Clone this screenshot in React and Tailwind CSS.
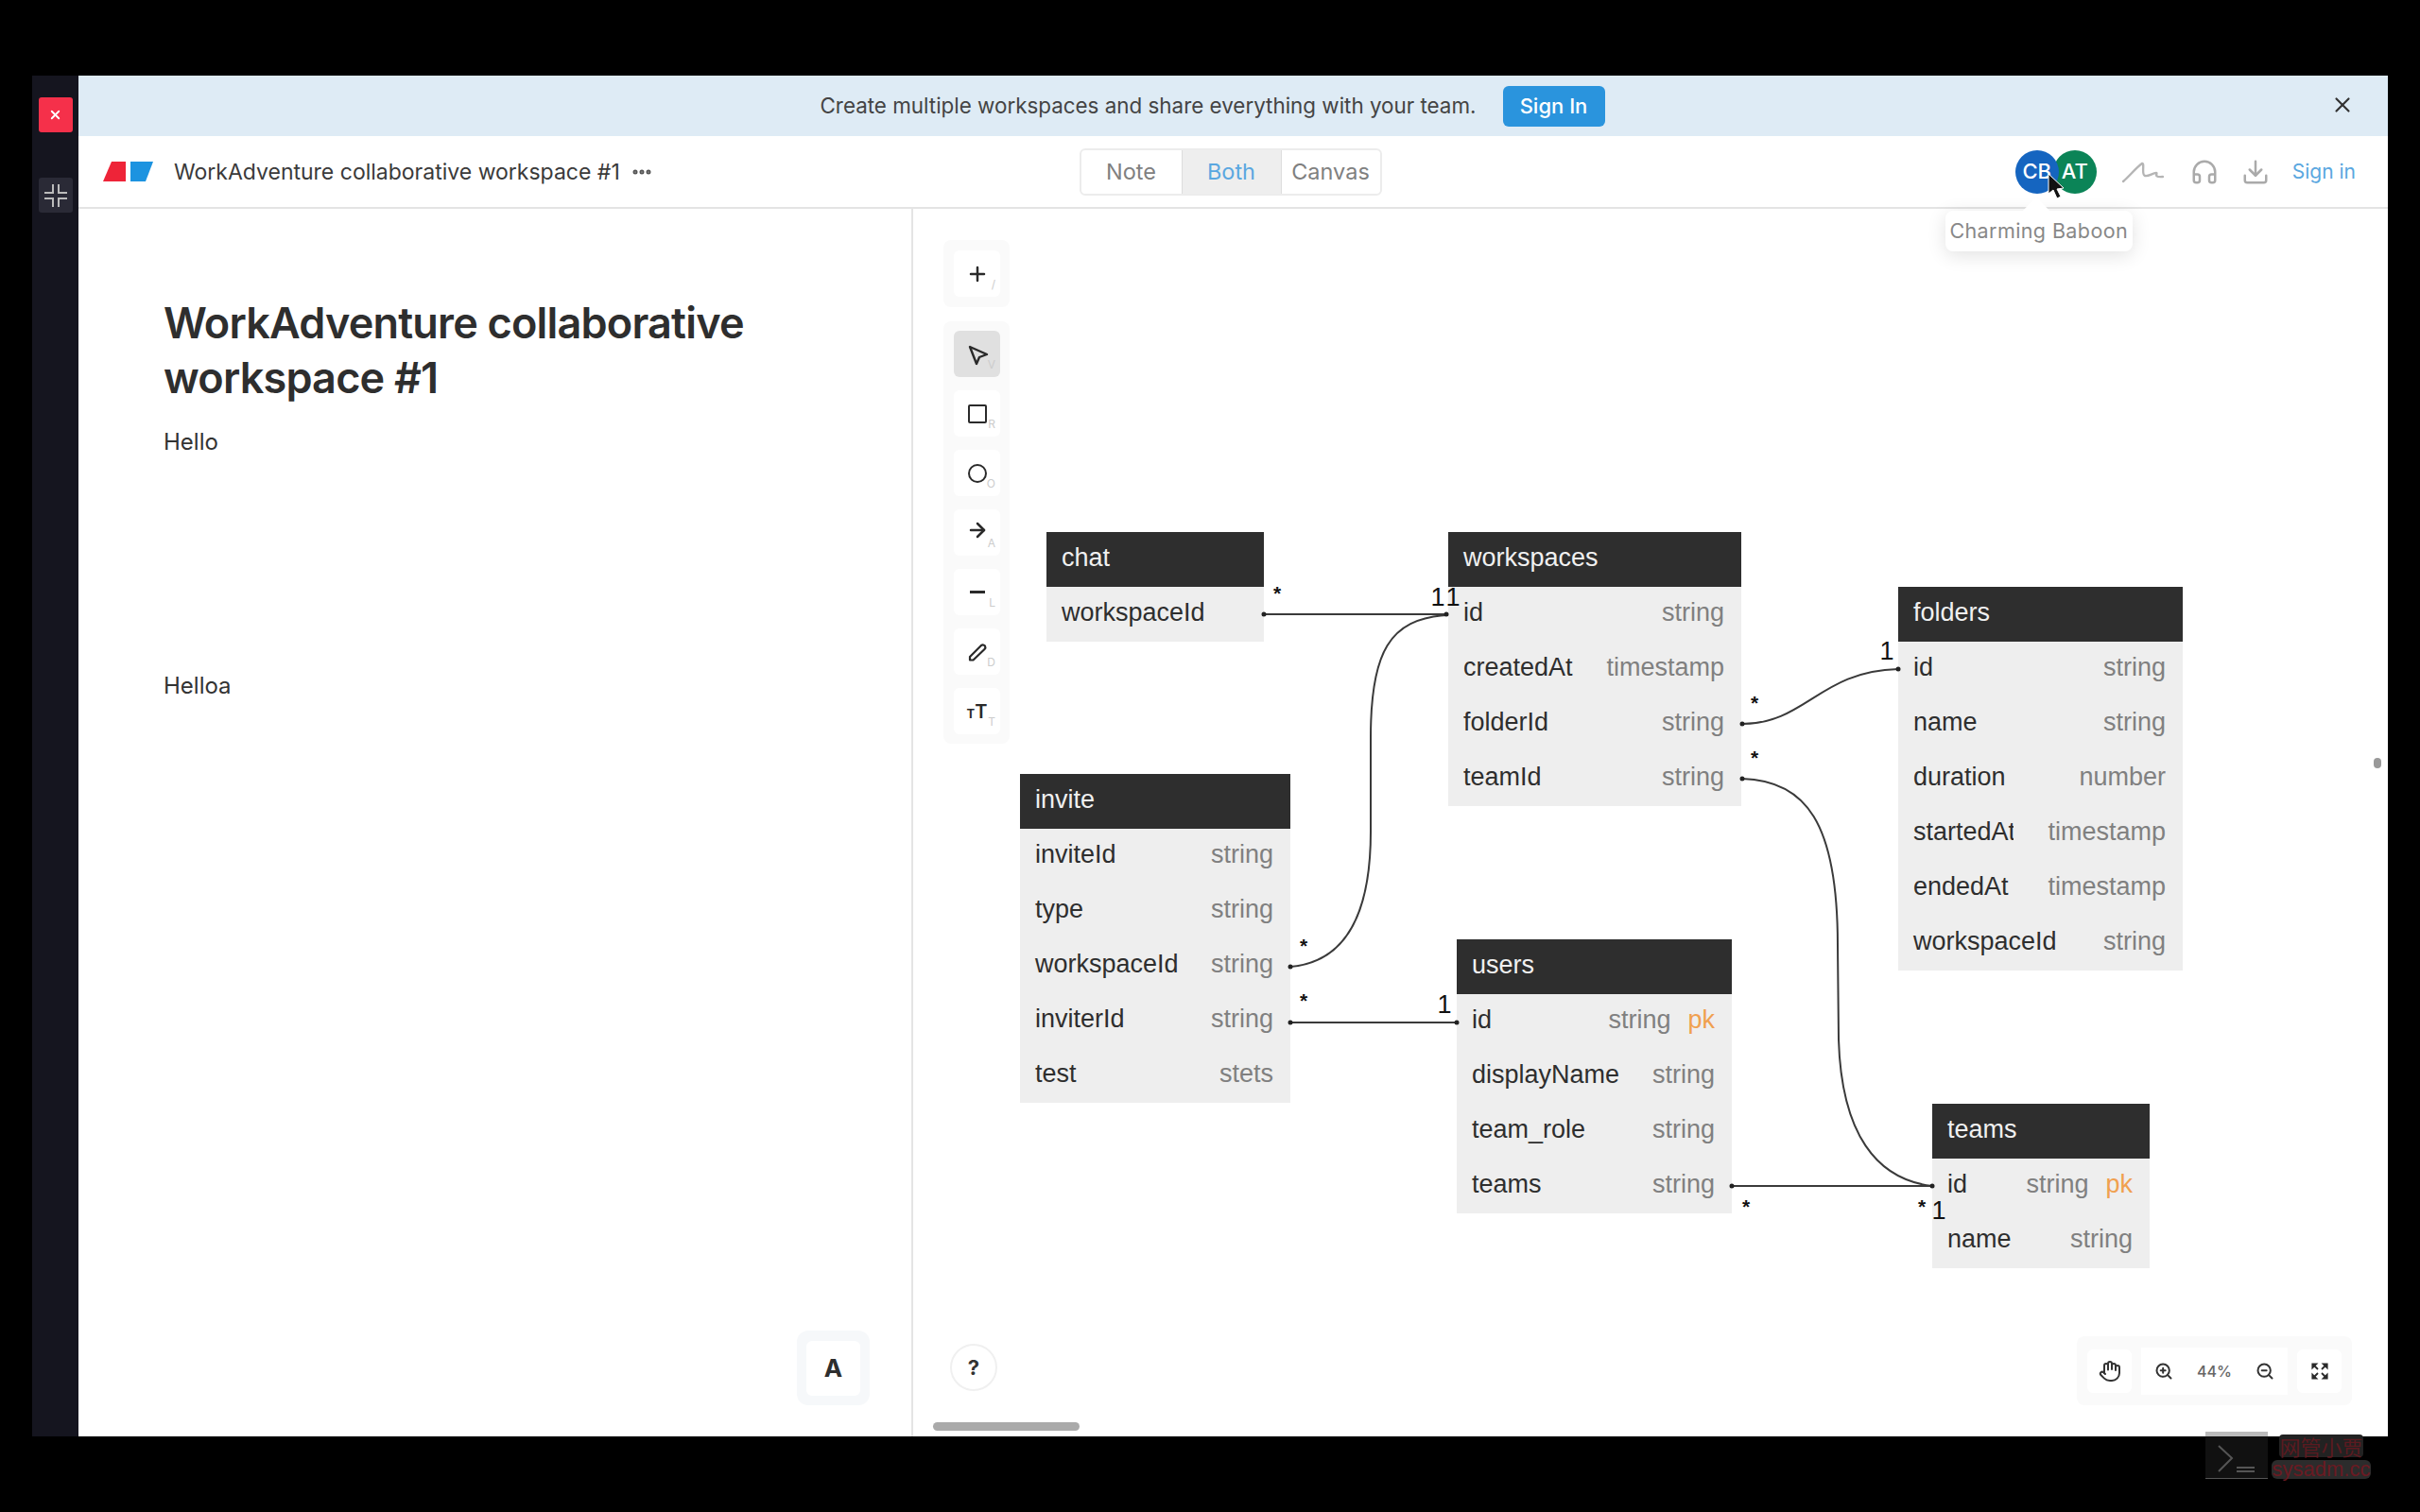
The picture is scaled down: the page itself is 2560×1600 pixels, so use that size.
import { ArrowRight, Download, Hand, Headphones, MoreHorizontal, Plus, X, ZoomIn, ZoomOut } from "lucide-react";

const tables = [
  {
    name: "chat",
    box: "left-[141px] top-[342px] w-[230px]",
    rows: [{ name: "workspaceId" }],
  },
  {
    name: "workspaces",
    box: "left-[566px] top-[342px] w-[310px]",
    rows: [
      { name: "id", type: "string" },
      { name: "createdAt", type: "timestamp" },
      { name: "folderId", type: "string" },
      { name: "teamId", type: "string" },
    ],
  },
  {
    name: "invite",
    box: "left-[113px] top-[598px] w-[286px]",
    rows: [
      { name: "inviteId", type: "string" },
      { name: "type", type: "string" },
      { name: "workspaceId", type: "string" },
      { name: "inviterId", type: "string" },
      { name: "test", type: "stets" },
    ],
  },
  {
    name: "users",
    box: "left-[575px] top-[773px] w-[291px]",
    rows: [
      { name: "id", type: "string", pk: true },
      { name: "displayName", type: "string" },
      { name: "team_role", type: "string" },
      { name: "teams", type: "string" },
    ],
  },
  {
    name: "folders",
    box: "left-[1042px] top-[400px] w-[301px]",
    rows: [
      { name: "id", type: "string" },
      { name: "name", type: "string" },
      { name: "duration", type: "number" },
      { name: "startedAt", type: "timestamp", clip: true },
      { name: "endedAt", type: "timestamp" },
      { name: "workspaceId", type: "string" },
    ],
  },
  {
    name: "teams",
    box: "left-[1078px] top-[947px] w-[230px]",
    rows: [
      { name: "id", type: "string", pk: true },
      { name: "name", type: "string" },
    ],
  },
];

const links = [
  "M1337 650 L1530 650",
  "M1365 1023 C1400 1020 1450 1000 1450 880 L1450 780 C1450 690 1470 655 1530 651",
  "M1365 1082 L1541 1082",
  "M1843 766 C1910 766 1925 710 2008 708",
  "M1843 824 C1910 826 1944 870 1944 1000 L1945 1100 C1948 1200 1985 1248 2044 1255",
  "M1832 1255 L2044 1255",
];

const dots = [
  [1337, 650], [1530, 650], [1365, 1023], [1365, 1082], [1541, 1082],
  [1843, 766], [2008, 708], [1843, 824], [2044, 1255], [1832, 1255],
];

const stars = [
  [1351, 625], [1856, 741], [1856, 799], [1379, 998], [1379, 1056], [1847, 1274], [2033, 1274],
];

const ones = [
  [1521, 641], [1537, 641], [1996, 698], [1528, 1072], [2051, 1290],
];

function Table({ table }) {
  return (
    <div className={`absolute ${table.box} bg-[#eeeeee] font-[family-name:'Liberation_Sans',sans-serif] text-[27px]`}>
      <div className="flex h-[58px] items-center bg-[#2e2e2e] pb-[4px] pl-4 text-[#f0f0f0]">{table.name}</div>
      {table.rows.map((row) => (
        <div key={row.name} className="flex h-[58px] items-center justify-between pb-[4px] pl-4 pr-[18px]">
          <span className={row.clip ? "w-[106px] overflow-hidden whitespace-nowrap text-[#2e2e2e]" : "whitespace-nowrap text-[#2e2e2e]"}>
            {row.name}
          </span>
          <span className="flex gap-[18px] text-[#808080]">
            {row.type}
            {row.pk && <span className="text-[#f0a050]">pk</span>}
          </span>
        </div>
      ))}
    </div>
  );
}

function Links() {
  return (
    <svg className="pointer-events-none absolute left-0 top-0 h-full w-full" fill="none">
      <g transform="translate(-966 -221)">
        {links.map((d) => (
          <path key={d} d={d} stroke="#3a3a3a" strokeWidth="2" />
        ))}
        {dots.map(([x, y]) => (
          <circle key={`${x}-${y}`} cx={x} cy={y} r="2.5" fill="#222222" />
        ))}
        <g fontFamily="Liberation Sans, sans-serif" fill="#111111">
          {stars.map(([x, y]) => (
            <text key={`${x}-${y}`} x={x} y={y + 10} fontSize="21" fontWeight="700" textAnchor="middle">*</text>
          ))}
          {ones.map(([x, y]) => (
            <text key={`${x}-${y}`} x={x} y={y} fontSize="27" textAnchor="middle">1</text>
          ))}
        </g>
      </g>
    </svg>
  );
}

function ToolButton({ hint, active, children }) {
  return (
    <div className={`relative flex h-[49px] w-[49px] items-center justify-center rounded-md ${active ? "bg-[#e0e0e0]" : "bg-white"}`}>
      {children}
      <span className="absolute bottom-[7px] right-[5px] text-[12px] leading-none text-[#cccccc]">{hint}</span>
    </div>
  );
}

function Toolbar() {
  return (
    <div className="absolute left-[32px] top-[33px] flex w-[70px] flex-col gap-[15px]">
      <div className="rounded-lg bg-[#fafafa] px-[11px] py-[11px]">
        <ToolButton hint="/"><Plus size={24} strokeWidth={2.5} color="#2a2a2a" /></ToolButton>
      </div>
      <div className="flex flex-col gap-[14px] rounded-lg bg-[#fafafa] px-[11px] py-[10px]">
        <ToolButton hint="V" active>
          <svg width="24" height="24" viewBox="0 0 24 24" fill="none" stroke="#2a2a2a" strokeWidth="2.4" strokeLinejoin="round">
            <path d="M4 4 L22 12 L14 15 L11 22 Z" />
          </svg>
        </ToolButton>
        <ToolButton hint="R"><div className="h-[20px] w-[20px] rounded-[2px] border-[2.5px] border-[#2a2a2a]" /></ToolButton>
        <ToolButton hint="O"><div className="h-[20px] w-[20px] rounded-full border-[2.5px] border-[#2a2a2a]" /></ToolButton>
        <ToolButton hint="A"><ArrowRight size={24} strokeWidth={2.5} color="#2a2a2a" className="-mt-[5px]" /></ToolButton>
        <ToolButton hint="L"><div className="h-[3px] w-[16px] bg-[#2a2a2a]" /></ToolButton>
        <ToolButton hint="D">
          <svg width="24" height="24" viewBox="0 0 24 24" fill="none" stroke="#2a2a2a" strokeWidth="2.2" strokeLinejoin="round">
            <path d="M4 17 L16 5 Q18 3.5 20 5.5 Q21 7.5 19.5 9 L7.5 20.5 L4 20.5 Z" />
          </svg>
        </ToolButton>
        <ToolButton hint="T">
          <span className="flex items-baseline font-bold leading-none text-[#2a2a2a]">
            <span className="text-[13px]">T</span>
            <span className="text-[20px] font-semibold">T</span>
          </span>
        </ToolButton>
      </div>
    </div>
  );
}

function ZoomBar() {
  return (
    <div className="absolute left-[1231px] top-[1193px] flex h-[73px] w-[291px] items-center gap-[10px] rounded-lg bg-[#fafafa] px-[11px]">
      <div className="flex h-[46px] w-[47px] items-center justify-center rounded-md bg-white">
        <Hand size={24} strokeWidth={2} color="#333333" />
      </div>
      <div className="flex h-[50px] w-[155px] items-center justify-between bg-white px-[14px]">
        <ZoomIn size={20} strokeWidth={2.4} color="#333333" />
        <span className="text-[16px] font-medium text-[#666666]">44%</span>
        <ZoomOut size={20} strokeWidth={2.4} color="#333333" />
      </div>
      <div className="flex h-[46px] w-[47px] items-center justify-center rounded-md bg-white">
        <svg width="18" height="18" viewBox="0 0 18 18" fill="#2a2a2a" stroke="#2a2a2a" strokeWidth="1.2">
          <path d="M1 1 H6 L1 6 Z M17 1 H12 L17 6 Z M1 17 H6 L1 12 Z M17 17 H12 L17 12 Z" />
          <path d="M3 3 L7 7 M15 3 L11 7 M3 15 L7 11 M15 15 L11 11" fill="none" strokeWidth="1.8" />
        </svg>
      </div>
    </div>
  );
}

function Header() {
  return (
    <div className="grid h-[77px] shrink-0 grid-cols-[1fr_auto_1fr] items-center border-b-2 border-[#e4e4e4] pl-[26px] pr-[34px]">
      <div className="flex items-center">
        <svg width="53" height="21" viewBox="0 0 53 21">
          <path d="M0 21 L9 0 H24 V21 Z" fill="#ee2438" />
          <path d="M29 0 H53 L45 21 H29 Z" fill="#1c93e0" />
        </svg>
        <span className="ml-[22px] mt-[2px] text-[23px] text-[#3a3a3a]">WorkAdventure collaborative workspace #1</span>
        <MoreHorizontal size={24} strokeWidth={3} color="#555555" className="ml-[11px]" />
      </div>
      <div className="ml-[2px] flex h-[50px] overflow-hidden rounded-md border-2 border-[#ececec] text-[23.5px] text-[#808080]">
        <div className="flex w-[106px] items-center justify-center">Note</div>
        <div className="flex w-[106px] items-center justify-center border-x border-[#dddddd] bg-[#eeeeee] text-[#5aa7e0]">Both</div>
        <div className="flex w-[104px] items-center justify-center">Canvas</div>
      </div>
      <div className="flex items-center justify-end gap-[24px]">
        <div className="relative mr-[3px] flex">
          <div className="relative z-10 flex h-[46px] w-[46px] items-center justify-center rounded-full bg-[#1565c0] text-[22px] font-medium text-white">CB</div>
          <div className="-ml-[6px] flex h-[46px] w-[46px] items-center justify-center rounded-full bg-[#0b8457] text-[22px] font-medium text-white">AT</div>
          <svg className="absolute left-[34px] top-[24px] z-20" width="22" height="30" viewBox="0 0 22 30">
            <path d="M1 1 V22 L6 18 L10 27 L14 25 L10 17 L17 16 Z" fill="#111111" stroke="#ffffff" strokeWidth="1" />
          </svg>
          <div className="absolute left-[-74px] top-[64px] z-20 flex h-[43px] w-[198px] items-center justify-center rounded-lg bg-white text-[21.5px] tracking-[0.4px] text-[#888888] shadow-[0_4px_20px_rgba(0,0,0,0.12)]">
            Charming Baboon
            <div className="absolute left-[86px] top-[-10px] h-[20px] w-[20px] rotate-45 bg-white" />
          </div>
        </div>
        <svg width="44" height="24" viewBox="0 0 44 24" fill="none" stroke="#b5b5b5" strokeWidth="2.4" strokeLinecap="round" strokeLinejoin="round">
          <path d="M1 22 C8 16 15 7 21 3 C24 2 20 15 24 16 C28 17 32 13 36 13 C38 13 32 18 43 17" />
        </svg>
        <Headphones size={30} strokeWidth={2} color="#aaaaaa" className="ml-[4px]" />
        <Download size={30} strokeWidth={2} color="#aaaaaa" />
        <span className="text-[21px] text-[#5aa7e0]">Sign in</span>
      </div>
    </div>
  );
}

export default function App() {
  return (
    <div className="relative h-[1600px] w-[2560px] overflow-hidden bg-black pl-[34px] pt-[80px] font-[family-name:Inter,sans-serif]">
      <div className="flex h-[1440px] w-[2492px]">
        <div className="flex w-[49px] shrink-0 flex-col items-center gap-[48px] bg-[#15151f] pt-[23px]">
          <div className="flex h-[37px] w-[36px] items-center justify-center rounded-[3px] bg-[#f5304a]">
            <X size={15} strokeWidth={3} color="#ffffff" />
          </div>
          <div className="flex h-[37px] w-[36px] items-center justify-center rounded-[3px] bg-[#2a2a36]">
            <svg width="26" height="26" viewBox="0 0 26 26" fill="none" stroke="#bbbbbb" strokeWidth="2">
              <path d="M1 10 H10 V1 M16 1 V10 H25 M1 16 H10 V25 M16 25 V16 H25" />
            </svg>
          </div>
        </div>
        <div className="flex min-w-0 flex-1 flex-col overflow-hidden bg-white">
          <div className="relative flex h-[64px] shrink-0 items-center justify-center gap-[28px] bg-[#deebf5] pr-[44px] text-[22.4px] text-[#444444]">
            <span>Create multiple workspaces and share everything with your team.</span>
            <div className="flex h-[43px] w-[108px] items-center justify-center rounded-md bg-[#2a94dd] text-[22px] font-medium text-white">Sign In</div>
            <X size={26} strokeWidth={2} color="#333333" className="absolute right-[35px] top-[18px]" />
          </div>
          <Header />
          <div className="relative flex min-h-0 flex-1">
            <div className="relative w-[883px] shrink-0 border-r-2 border-[#e4e4e4] pl-[90px] pt-[92px] text-[#333333]">
              <h1 className="w-[680px] text-[45px] font-semibold leading-[58px] tracking-[-0.8px] text-[#2e2e2e]">WorkAdventure collaborative workspace #1</h1>
              <p className="mt-[24px] text-[24px] leading-[30px]">Hello</p>
              <p className="mt-[228px] text-[24px] leading-[30px]">Helloa</p>
              <div className="absolute left-[760px] top-[1187px] flex h-[79px] w-[77px] items-center justify-center rounded-xl bg-[#f6f8fa]">
                <div className="flex h-[58px] w-[57px] items-center justify-center rounded-md bg-white text-[26px] font-bold text-[#2e2e2e]">A</div>
              </div>
            </div>
            <div className="relative min-w-0 flex-1">
              {tables.map((table) => (
                <Table key={table.name} table={table} />
              ))}
              <Links />
              <Toolbar />
              <div className="absolute left-[39px] top-[1201px] flex h-[50px] w-[50px] items-center justify-center rounded-full border-2 border-[#f0f0f0] text-[22px] font-bold text-[#333333]">?</div>
              <ZoomBar />
              <div className="absolute left-[21px] top-[1284px] h-[9px] w-[155px] rounded-full bg-[#aaaaaa]" />
              <div className="absolute left-[1545px] top-[581px] h-[11px] w-[8px] rounded-full bg-[#999999]" />
            </div>
          </div>
        </div>
      </div>
      <div className="absolute left-[2333px] top-[1515px] flex h-[50px] w-[66px] flex-col border-b border-[#555555] bg-[#111111]">
        <div className="h-[5px] bg-[#bbbbbb]" />
        <svg width="66" height="44" viewBox="0 0 66 44" fill="none" stroke="#555555" strokeWidth="2">
          <path d="M14 10 L28 23 L14 37 M33 33 H52 M33 37 H52" />
        </svg>
      </div>
      <div className="absolute left-[2403px] top-[1518px] flex w-[105px] flex-col items-center gap-[3px]">
        <span className="rounded-sm bg-[#222222] font-[family-name:'Noto_Sans_CJK_SC',sans-serif] text-[22px] leading-[24px] text-[#5c1a20]">网管小贾</span>
        <span className="rounded-md bg-[#2c2c2c] px-[1px] font-[family-name:'Liberation_Sans',sans-serif] text-[22px] leading-[20px] text-[#6a1a22]">sysadm.cc</span>
      </div>
    </div>
  );
}
